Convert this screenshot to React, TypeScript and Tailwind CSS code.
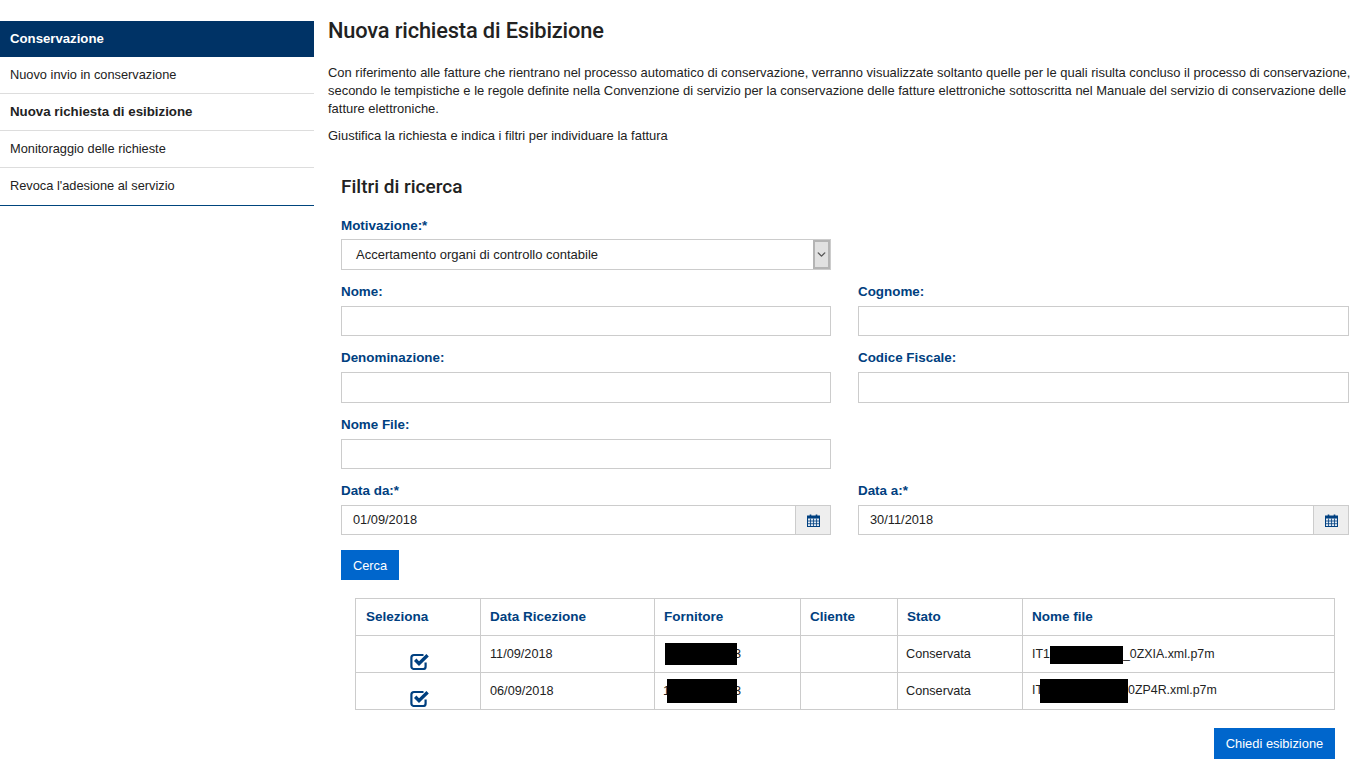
import { LuChevronDown } from "react-icons/lu";

const labelClass = "block h-[20px] text-[13.4px] font-bold leading-[22px] text-[#004080]";

const CalendarIcon = () => (
  <svg viewBox="0 0 13 13" className="h-[13px] w-[13px]" fill="none">
    <rect x="0.5" y="2" width="12" height="10.5" fill="#dfe8f2" stroke="#004080" />
    <rect x="0.5" y="2" width="12" height="2.5" fill="#004080" />
    <path d="M3.5 0.5v3M9.5 0.5v3" stroke="#004080" strokeWidth="1.6" />
    <path d="M3.5 4.5v8M6.5 4.5v8M9.5 4.5v8M0.5 7h12M0.5 9.7h12" stroke="#004080" strokeWidth="0.8" />
  </svg>
);

const CheckIcon = () => (
  <svg viewBox="0 0 20 17" className="mx-auto h-[17px] w-[20px]" fill="none">
    <path d="M13.5 2H4a2.6 2.6 0 0 0-2.6 2.6v8.8A2.6 2.6 0 0 0 4 16h9a2.6 2.6 0 0 0 2.6-2.6V9.5" stroke="#004080" strokeWidth="2.2" />
    <path d="M5.2 6.8l3.8 3.8L17.6 2.2" stroke="#004080" strokeWidth="3.4" />
  </svg>
);

const Field = ({ label }: { label: string }) => (
  <div>
    <label className={labelClass}>{label}</label>
    <div className="mt-[5px] h-[30.33px] border border-[#ccc] bg-white" />
  </div>
);

const DateField = ({ label, value }: { label: string; value: string }) => (
  <div>
    <label className={labelClass}>{label}</label>
    <div className="mt-[5px] flex h-[30.33px] border border-[#ccc] bg-white">
      <span className="flex-1 pl-[11px] text-[12.8px] leading-[28px] text-[#222]">{value}</span>
      <span className="flex w-[35px] items-center justify-center border-l border-[#ccc] bg-[#eee]">
        <CalendarIcon />
      </span>
    </div>
  </div>
);

const rows = [
  { date: "11/09/2018", lead: "", box: "w-[72px] h-[22px]", file: "IT1", tail: "_0ZXIA.xml.p7m", fileBox: "w-[73px] h-[18px]" },
  { date: "06/09/2018", lead: "1", box: "w-[70px] h-[24px]", file: "IT", tail: "0ZP4R.xml.p7m", fileBox: "w-[88px] h-[24px] ml-[-3px]" },
];

export default function App() {
  return (
    <div className="flex min-h-[777px] bg-white font-['Liberation_Sans',Arial,sans-serif] text-[12.96px] text-[#222]">
      <aside className="w-[314px] shrink-0 pt-[21px]">
        <div className="h-[36px] bg-[#003366] pl-[10px] text-[13.2px] font-bold leading-[36px] text-white">Conservazione</div>
        <nav className="border-b border-[#00457d] text-[12.8px]">
          <a className="block h-[37px] border-b border-[#ddd] pl-[10px] leading-[35px]">Nuovo invio in conservazione</a>
          <a className="block h-[37px] border-b border-[#ddd] pl-[10px] text-[13.3px] font-bold leading-[36px]">Nuova richiesta di esibizione</a>
          <a className="block h-[37px] border-b border-[#ddd] pl-[10px] leading-[36px]">Monitoraggio delle richieste</a>
          <a className="block h-[37px] pl-[10px] leading-[36px]">Revoca l'adesione al servizio</a>
        </nav>
      </aside>

      <main className="min-w-0 flex-1 pl-[14px]">
        <h1 className="mt-[17px] font-['Roboto',sans-serif] text-[21.8px] font-medium leading-[28px] tracking-[-0.15px] text-[#222]">Nuova richiesta di Esibizione</h1>
        <p className="mt-[19px] w-[1027px] leading-[18px]">
          Con riferimento alle fatture che rientrano nel processo automatico di conservazione, verranno visualizzate soltanto quelle per le quali risulta concluso il processo di conservazione, secondo le tempistiche e le regole definite nella Convenzione di servizio per la conservazione delle fatture elettroniche sottoscritta nel Manuale del servizio di conservazione delle fatture elettroniche.
        </p>
        <p className="mt-[9px] leading-[18px]">Giustifica la richiesta e indica i filtri per individuare la fattura</p>

        <section className="pl-[13px]">
          <h2 className="mt-[30px] font-['Roboto',sans-serif] text-[19px] font-medium leading-[24px]">Filtri di ricerca</h2>

          <div className="mt-[17px] w-[490px]">
            <label className="block h-[20px] text-[13.4px] font-bold leading-[20px] text-[#004080]">Motivazione:*</label>
            <div className="mt-[3px] flex h-[31px] border border-[#ccc] bg-white">
              <span className="flex-1 pl-[14px] text-[13px] leading-[29px]">Accertamento organi di controllo contabile</span>
              <span className="flex w-[17px] items-center justify-center border-2 border-[#b4b4b4] bg-[#e1e1e1]">
                <LuChevronDown strokeWidth={2.5} className="h-[13px] w-[13px] text-[#555]" />
              </span>
            </div>
          </div>

          <div className="mt-[11px] grid w-[1008px] grid-cols-[490px_491px] gap-x-[27px] gap-y-[11px]">
            <Field label="Nome:" />
            <Field label="Cognome:" />
            <Field label="Denominazione:" />
            <Field label="Codice Fiscale:" />
            <Field label="Nome File:" />
            <div />
            <DateField label="Data da:*" value="01/09/2018" />
            <DateField label="Data a:*" value="30/11/2018" />
          </div>

          <button className="mt-[15px] block h-[30px] w-[58px] bg-[#0066cc] text-[12.8px] text-white">Cerca</button>

          <table className="mt-[18px] ml-[14px] w-[979px] table-fixed border-collapse border border-[#ccc] text-[12.7px]">
            <colgroup>
              <col className="w-[125px]" />
              <col className="w-[174px]" />
              <col className="w-[146px]" />
              <col className="w-[97px]" />
              <col className="w-[125px]" />
              <col className="w-[312px]" />
            </colgroup>
            <thead>
              <tr className="h-[37px] text-left text-[13.5px] font-bold text-[#004080]">
                <th className="border border-[#ccc] pl-[10px]">Seleziona</th>
                <th className="border border-[#ccc] pl-[9px]">Data Ricezione</th>
                <th className="border border-[#ccc] pl-[9px]">Fornitore</th>
                <th className="border border-[#ccc] pl-[9px]">Cliente</th>
                <th className="border border-[#ccc] pl-[9px]">Stato</th>
                <th className="border border-[#ccc] pl-[9px]">Nome file</th>
              </tr>
            </thead>
            <tbody>
              {rows.map((row) => (
                <tr key={row.date} className="h-[37px]">
                  <td className="border border-[#ccc] pl-[3px] pt-[15px]">
                    <CheckIcon />
                  </td>
                  <td className="border border-[#ccc] pl-[9px]">{row.date}</td>
                  <td className="whitespace-nowrap border border-[#ccc] pl-[10px]">
                    <span className={row.lead ? "ml-[-2px] mr-[-3px]" : ""}>{row.lead}</span>
                    <span className={`relative inline-block ${row.box} bg-black align-middle`} />
                    <span className="ml-[-3px]">3</span>
                  </td>
                  <td className="border border-[#ccc]" />
                  <td className="border border-[#ccc] pl-[8px]">Conservata</td>
                  <td className="whitespace-nowrap border border-[#ccc] pl-[9px] text-[12.4px]">
                    {row.file}
                    <span className={`inline-block ${row.fileBox} bg-black align-middle`} />
                    {row.tail}
                  </td>
                </tr>
              ))}
            </tbody>
          </table>

          <div className="mt-[18px] flex w-[994px] justify-end">
            <button className="h-[31px] w-[121px] bg-[#0066cc] text-[12.9px] text-white">Chiedi esibizione</button>
          </div>
        </section>
      </main>
    </div>
  );
}
